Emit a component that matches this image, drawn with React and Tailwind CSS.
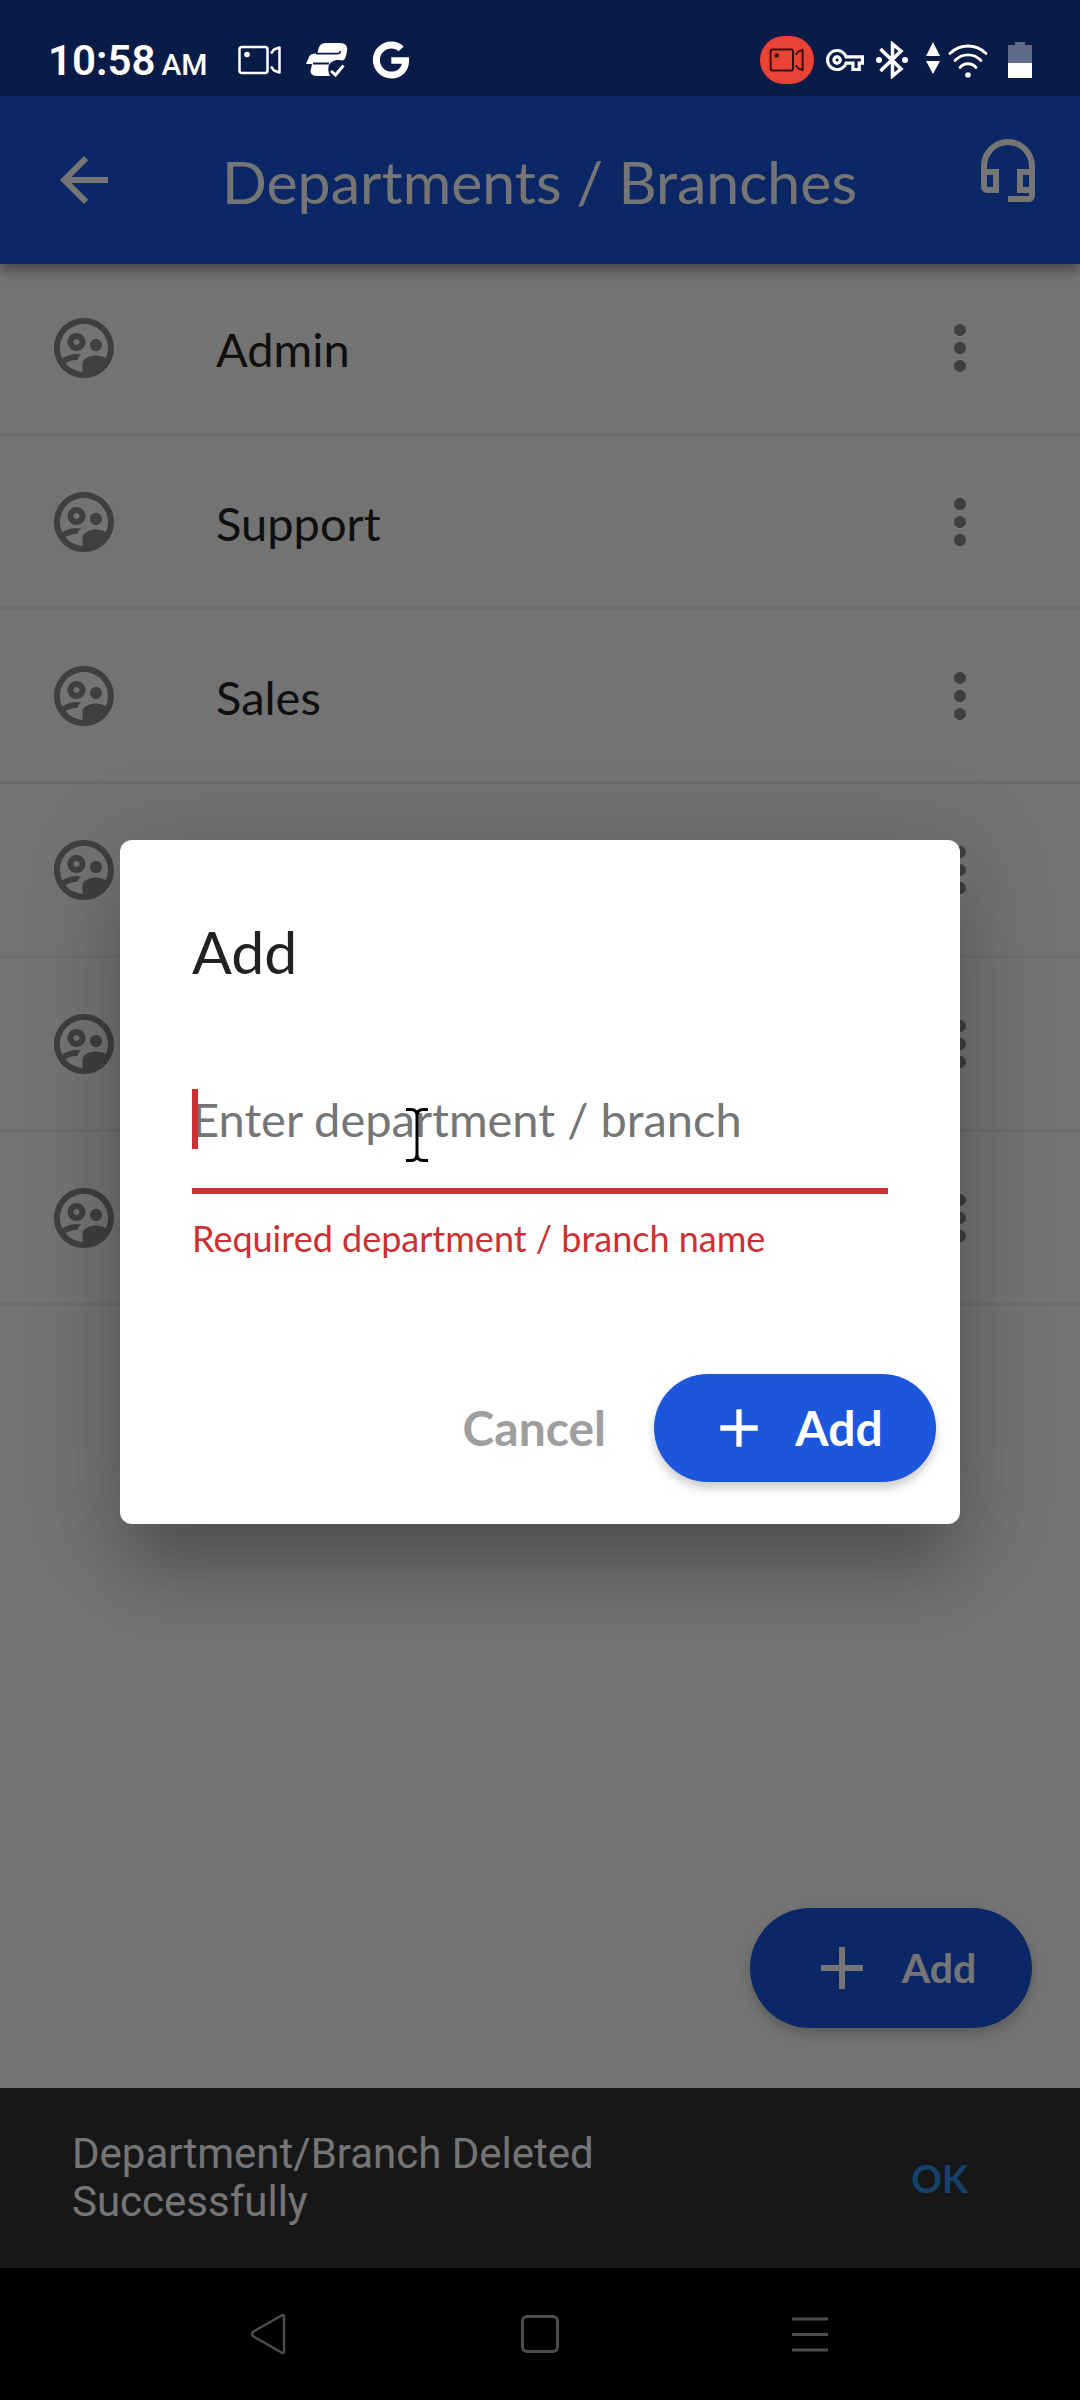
import { FaGoogle } from "react-icons/fa";
import {
  MdAdd,
  MdArrowBack,
  MdMoreVert,
  MdOutlineSupervisedUserCircle,
  MdOutlineVpnKey,
} from "react-icons/md";

// rows past the third are covered by the dialog
const DEPARTMENTS = ["Admin", "Support", "Sales", "", "", ""];

function CameraIcon({ className }) {
  return (
    <svg viewBox="0 0 44 30" className={className} fill="none" stroke="currentColor" strokeWidth="2.5" strokeLinejoin="round">
      <rect x="1.5" y="2" width="28" height="26" rx="2.5" />
      <path d="M33 8.500L36 4.500L41.500 2.500V27.500L36 25.500L33 21.500" />
      <circle cx="9" cy="9.500" r="2.800" fill="currentColor" stroke="none" />
    </svg>
  );
}

function ExpressIcon() {
  return (
    <svg viewBox="0 0 42 34" className="h-[34px] w-[42px]" fill="currentColor">
      <path d="M20 0H34C40 0 42 4 41 8L40 13C39 16 38 17.500 35.500 17.500C29 16 24 19 22.500 23.500C22 27 22.500 30 24 33H11C6 33 3.500 30 5 26L6 21H0L3 14C4 11.500 6 10.500 11.500 10.500C12.500 4 14 0 20 0Z" />
      <path d="M10 10.700H31C33.500 10.700 34.500 9.500 34 8M7 20.500H23" fill="none" stroke="#091b47" strokeWidth="1.800" />
      <path d="M25 28L29.500 32L37.500 22.500" fill="none" stroke="currentColor" strokeWidth="3" />
    </svg>
  );
}

function BluetoothIcon() {
  return (
    <svg viewBox="0 0 32 38" className="h-[38px] w-8" fill="none" stroke="currentColor" strokeWidth="3.5">
      <path d="M4.500 8L25 28L16.500 35V3L25 10L4.500 30" />
      <circle cx="3" cy="19" r="3" fill="currentColor" stroke="none" />
      <circle cx="29" cy="19" r="3" fill="currentColor" stroke="none" />
    </svg>
  );
}

function WifiIcon() {
  return (
    <svg viewBox="0 0 62 36" className="h-9 w-[62px]" fill="none" stroke="currentColor" strokeWidth="2.8" strokeLinecap="round">
      <path d="M0 14L7 0L14 14ZM0 19L7 32L14 19Z" fill="currentColor" stroke="none" />
      <path d="M24 11.500C34 1.500 50 1.500 60 11.500M29 18.500C36 11 48 11 55 18.500M34 25.500C38.500 20.500 45.500 20.500 50 25.500" />
      <circle cx="42" cy="33" r="2.800" fill="currentColor" stroke="none" />
    </svg>
  );
}

function BatteryIcon() {
  return (
    <svg viewBox="0 0 24 36" className="h-9 w-6" fill="currentColor">
      <path d="M7 0H17V3H24V21H0V3H7Z" opacity=".35" />
      <path d="M0 21H24V36H0Z" />
    </svg>
  );
}

function HeadsetIcon() {
  return (
    <svg viewBox="0 0 24 24" className="size-18" fill="currentColor" fillRule="evenodd">
      <path d="M19 13h-2v4h2v-4M7 13H5v4h2v-4M12 1a9 9 0 0 0-9 9v7a2 2 0 0 0 2 2h4v-8H5v-1a7 7 0 0 1 14 0v1h-4v8h4v1h-7v2h7a2 2 0 0 0 2-2V10a9 9 0 0 0-9-9z" />
    </svg>
  );
}

function StatusBar() {
  return (
    <div className="flex h-24 shrink-0 items-center justify-between bg-[#091b47] px-12 pt-6 font-[Roboto,sans-serif] text-white">
      <div className="flex items-center">
        <div className="flex w-[190px] items-baseline gap-1.5 pt-1.5 text-[42px] leading-12 font-semibold whitespace-nowrap">
          10:58 <span className="text-[30px] font-medium">AM</span>
        </div>
        <div className="flex items-center gap-6">
          <CameraIcon className="h-[30px] w-11" />
          <ExpressIcon />
          <FaGoogle className="size-[38px]" />
        </div>
      </div>
      <div className="flex items-center gap-3">
        <div className="flex h-12 w-[54px] items-center justify-center rounded-full bg-[#ea4335] text-[#3a0d0a]">
          <CameraIcon className="h-6 w-9" />
        </div>
        <MdOutlineVpnKey className="size-[38px]" />
        <BluetoothIcon />
        <div className="flex items-center gap-5 pl-1.5">
          <WifiIcon />
          <BatteryIcon />
        </div>
      </div>
    </div>
  );
}

function Header() {
  return (
    <header className="relative z-10 flex h-42 items-center bg-[#1c56dd] px-9 text-white shadow-[0_6px_12px_rgba(0,0,0,0.4)]">
      <button aria-label="Back" className="w-[186px] px-3">
        <MdArrowBack className="size-18" />
      </button>
      <h1 className="flex-1 pt-1 text-[59px] leading-18 whitespace-nowrap">Departments / Branches</h1>
      <button aria-label="Support" className="pb-4">
        <HeadsetIcon />
      </button>
    </header>
  );
}

function DepartmentRow({ name }) {
  return (
    <li className="flex h-[174px] items-center border-b-[3px] border-[#ebebeb] px-12 text-[#898989]">
      <MdOutlineSupervisedUserCircle className="size-18" />
      <span className="flex-1 pt-0.5 pl-24 text-[47px] leading-14 text-[#212121]">{name}</span>
      <button aria-label="Options" className="px-9">
        <MdMoreVert className="size-18" />
      </button>
    </li>
  );
}

function AddDialog() {
  return (
    <form
      role="dialog"
      aria-labelledby="dialog-title"
      className="mx-30 w-full rounded-xl bg-white pt-[76px] pb-[42px] shadow-[0_54px_66px_-12px_rgba(0,0,0,0.24),0_12px_90px_12px_rgba(0,0,0,0.12)]"
    >
      <div className="px-18">
        <h2 id="dialog-title" className="text-[59px] leading-18 text-[#212121]">Add</h2>
        <div className="relative mt-15">
          <input
            type="text"
            aria-label="Department / branch"
            aria-describedby="name-error"
            placeholder="Enter department / branch"
            className="block h-[146px] w-full border-b-6 border-[#cc3033] pt-0.5 text-[47px] outline-none placeholder:text-[#757575]"
          />
          {/* caret */}
          <span className="absolute top-[41px] left-0 h-15 w-1.5 bg-[#cc3033]" />
          {/* mouse pointer */}
          <svg viewBox="0 0 22 54" className="absolute top-15 left-[214px] h-[54px] w-[22px]" fill="none" stroke="#000" strokeWidth="3">
            <path d="M0 1.500H5C9 1.500 11 4 11 8V46C11 50 9 52.500 5 52.500H0M22 1.500H17C13 1.500 11 4 11 8M22 52.500H17C13 52.500 11 50 11 46" />
          </svg>
        </div>
        <p id="name-error" className="mt-5 text-[36px] leading-12 text-[#cc3033]">Required department / branch name</p>
      </div>
      <div className="mt-28 flex items-center justify-end gap-12 px-6">
        <button type="button" className="text-[48px] leading-14 font-bold text-[#9e9e9e]">Cancel</button>
        <button
          type="submit"
          className="flex h-27 w-[282px] items-center justify-center gap-6 rounded-full bg-[#1c56dd] text-[48px] leading-14 font-bold text-white shadow-[0_6px_10px_rgba(0,0,0,0.2)]"
        >
          <MdAdd className="size-16" />
          Add
        </button>
      </div>
    </form>
  );
}

function NavBar() {
  return (
    <nav className="flex h-33 shrink-0 items-center justify-center gap-[228px] bg-black text-[#4d4d4d]">
      <button aria-label="Back">
        <svg viewBox="0 0 42 42" className="size-[42px]" fill="none" stroke="currentColor" strokeWidth="2.5" strokeLinejoin="round">
          <path d="M33 3.500V38.500C33 40 32 40.500 30.500 39.500L2.500 23.500C0.500 22 0.500 20 2.500 18.500L30.500 2.500C32 1.500 33 2 33 3.500Z" />
        </svg>
      </button>
      <button aria-label="Home" className="size-[38px] rounded-md border-[3px] border-current" />
      <button aria-label="Recents">
        <svg viewBox="0 0 42 42" className="size-[42px]" stroke="currentColor" strokeWidth="3">
          <path d="M5 6H41M5 21.500H41M5 37H41" />
        </svg>
      </button>
    </nav>
  );
}

export default function App() {
  return (
    <div className="flex min-h-screen flex-col font-[Lato,sans-serif]">
      <StatusBar />
      <main className="relative flex flex-1 flex-col bg-[#fafafa]">
        <Header />
        <ul className="-mt-0.5">
          {DEPARTMENTS.map((name, i) => (
            <DepartmentRow key={i} name={name} />
          ))}
        </ul>
        <div className="mt-auto flex justify-end px-12 pb-15">
          <button className="flex h-30 w-[282px] items-center justify-center gap-6 rounded-full bg-[#1c56dd] text-[41px] font-bold text-white shadow-[0_6px_12px_rgba(0,0,0,0.2)]">
            <MdAdd className="size-18" />
            Add
          </button>
        </div>
        <div className="flex h-45 items-center justify-between bg-[#323232] pr-28 pl-18">
          <p className="w-[640px] font-[Roboto,sans-serif] text-[42px] leading-12 text-white">
            Department/Branch Deleted Successfully
          </p>
          <button className="text-[38px] font-bold text-[#2e8fe6]">OK</button>
        </div>
        <div className="absolute inset-0 z-20 flex items-center bg-black/54">
          <AddDialog />
        </div>
      </main>
      <NavBar />
    </div>
  );
}
